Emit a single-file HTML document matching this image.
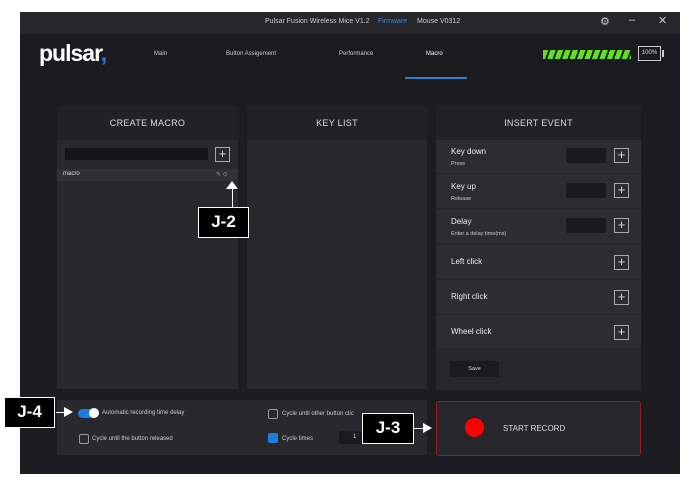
<!DOCTYPE html><html><head><style>
*{margin:0;padding:0;box-sizing:border-box}
body{width:695px;height:485px;background:#fff;font-family:"Liberation Sans",sans-serif;position:relative;overflow:hidden;color:#ddd}
.a{position:absolute}
.win{left:20px;top:12px;width:660px;height:462px;background:#1d1d21}
.title{left:20px;top:12px;width:660px;height:22px;background:#26262b;font-size:7px;color:#ccc}
.nav{left:20px;top:34px;width:660px;height:46px;background:#1b1b1f}
.panel{background:#28282d}
.hdr{background:#222226;font-size:9px;color:#ddd;text-align:center;line-height:34px;letter-spacing:.3px}
.row{left:436px;width:205px;height:33px;background:#2c2c31}
.row b{position:absolute;left:15px;font-weight:normal;font-size:8px;color:#eee}
.row i{position:absolute;left:15px;font-style:normal;font-size:5.5px;color:#ccc}
.inp{position:absolute;left:130px;top:8px;width:40px;height:15px;background:#1a1a1d;border-radius:2px}
.plus{position:absolute;width:15px;height:15px;border:1px solid #aaa;color:#ddd;font-size:13px;line-height:12px;text-align:center}
.lab{background:#000;border:1.5px solid #fff;color:#fff;font-weight:bold;font-size:17px;text-align:center;line-height:28px}
.cb{width:10px;height:10px;border:1px solid #999;border-radius:2px}
.sm{font-size:6px;color:#ccc}
</style></head><body>
<div class="a win"></div>
<div class="a title"><span class="a" style="left:245px;top:6px">Pulsar Fusion Wireless Mice V1.2</span><span class="a" style="left:358px;top:6px;color:#3a8be0">Firmware</span><span class="a" style="left:397px;top:6px">Mouse V0312</span>
<span class="a" style="left:580px;top:3px;font-size:11px">⚙</span><span class="a" style="left:609px;top:2px;font-size:11px">–</span><span class="a" style="left:638px;top:2px;font-size:11px">✕</span></div>
<div class="a nav"></div>
<div class="a" style="left:39px;top:40px;font-size:23px;font-weight:bold;color:#fff;letter-spacing:-1px">pulsar<span style="color:#1e7be0">,</span></div>
<div class="a sm" style="left:154px;top:51px">Main</div>
<div class="a sm" style="left:226px;top:51px">Button Assigement</div>
<div class="a sm" style="left:339px;top:51px">Performance</div>
<div class="a sm" style="left:426px;top:51px;color:#fff">Macro</div>
<div class="a" style="left:405px;top:77px;width:62px;height:2px;background:#2d7fd0"></div>
<div class="a" style="left:543px;top:50px;width:88px;height:9px;background:repeating-linear-gradient(110deg,#5fe020 0 5px,#1b1b1f 5px 7px)"></div>
<div class="a" style="left:638px;top:46px;width:23px;height:15px;border:1px solid #ccc;font-size:6px;line-height:13px;text-align:center">100%</div>
<div class="a" style="left:662px;top:50px;width:2px;height:7px;background:#ccc"></div>

<div class="a panel" style="left:57px;top:106px;width:181px;height:283px"></div>
<div class="a hdr" style="left:57px;top:106px;width:181px;height:34px">CREATE MACRO</div>
<div class="a" style="left:65px;top:148px;width:143px;height:12px;background:#161618"></div>
<div class="a plus" style="left:215px;top:147px">+</div>
<div class="a" style="left:57px;top:169px;width:181px;height:12px;background:#303036"></div>
<div class="a" style="left:63px;top:171px;font-size:6px;color:#ddd">macro</div>
<div class="a" style="left:216px;top:171px;font-size:6px;color:#999">✎ ⊙</div>
<div class="a panel" style="left:247px;top:106px;width:180px;height:283px"></div>
<div class="a hdr" style="left:247px;top:106px;width:180px;height:34px">KEY LIST</div>
<div class="a panel" style="left:436px;top:106px;width:205px;height:284px;background:#26262b"></div>
<div class="a hdr" style="left:436px;top:106px;width:205px;height:34px">INSERT EVENT</div>
<div class="a row" style="top:140px"><b style="top:7px">Key down</b><i style="top:21px">Press</i><div class="inp"></div><div class="plus" style="left:178px;top:8px">+</div></div>
<div class="a row" style="top:175px"><b style="top:7px">Key up</b><i style="top:21px">Release</i><div class="inp"></div><div class="plus" style="left:178px;top:8px">+</div></div>
<div class="a row" style="top:210px"><b style="top:7px">Delay</b><i style="top:21px">Enter a delay time(ms)</i><div class="inp"></div><div class="plus" style="left:178px;top:8px">+</div></div>
<div class="a row" style="top:245px"><b style="top:12px">Left click</b><div class="plus" style="left:178px;top:10px">+</div></div>
<div class="a row" style="top:280px"><b style="top:12px">Right click</b><div class="plus" style="left:178px;top:10px">+</div></div>
<div class="a row" style="top:315px"><b style="top:12px">Wheel click</b><div class="plus" style="left:178px;top:10px">+</div></div>
<div class="a" style="left:450px;top:361px;width:49px;height:16px;background:#1b1b1e;font-size:5.5px;text-align:center;line-height:16px">Save</div>

<div class="a panel" style="left:57px;top:400px;width:370px;height:55px"></div>
<div class="a" style="left:78px;top:409px;width:20px;height:9px;border-radius:5px;background:#1e7be0"></div>
<div class="a" style="left:89px;top:408px;width:10px;height:10px;border-radius:5px;background:#fff"></div>
<div class="a sm" style="left:102px;top:410px">Automatic recording time delay</div>
<div class="a cb" style="left:79px;top:434px"></div><div class="a sm" style="left:92px;top:436px">Cycle until the button released</div>
<div class="a cb" style="left:268px;top:409px"></div><div class="a sm" style="left:282px;top:411px">Cycle until other button clic</div>
<div class="a cb" style="left:268px;top:433px;border-color:#1e7be0;background:#1e7be0"></div><div class="a sm" style="left:282px;top:436px">Cycle times</div>
<div class="a" style="left:339px;top:431px;width:25px;height:13px;background:#1b1b1e;font-size:6px;padding:3px 0 0 14px">1</div>
<div class="a" style="left:436px;top:401px;width:205px;height:55px;border:1px solid #a01820;border-radius:3px;background:#26262b"></div>
<div class="a" style="left:465px;top:418px;width:19px;height:19px;border-radius:50%;background:#f00"></div>
<div class="a" style="left:503px;top:424px;font-size:8px;color:#ddd">START RECORD</div>

<div class="a" style="left:232px;top:186px;width:1px;height:21px;background:#fff"></div>
<div class="a" style="left:226px;top:181px;width:0;height:0;border-left:6px solid transparent;border-right:6px solid transparent;border-bottom:8px solid #fff"></div>
<div class="a lab" style="left:198px;top:207px;width:51px;height:31px">J-2</div>
<div class="a lab" style="left:4px;top:397px;width:51px;height:31px">J-4</div>
<div class="a" style="left:56px;top:412px;width:10px;height:1px;background:#fff"></div>
<div class="a" style="left:64px;top:407px;border-top:5px solid transparent;border-bottom:5px solid transparent;border-left:9px solid #fff"></div>
<div class="a lab" style="left:362px;top:413px;width:52px;height:31px">J-3</div>
<div class="a" style="left:414px;top:428px;width:10px;height:1px;background:#fff"></div>
<div class="a" style="left:423px;top:423px;border-top:5px solid transparent;border-bottom:5px solid transparent;border-left:9px solid #fff"></div>
</body></html>
